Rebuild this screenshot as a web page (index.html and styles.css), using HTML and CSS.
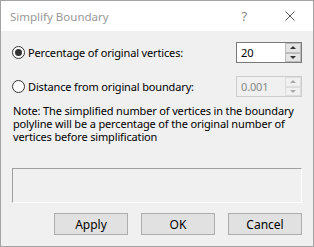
FILE: index.html
```html
<!DOCTYPE html>
<html lang="en">
<head>
<meta charset="UTF-8" />
<title>Simplify Boundary</title>
<link rel="stylesheet" href="styles.css">
</head>
<body>

<div class="window">
  <div class="titlebar">
    <span class="title">Simplify Boundary</span>
    <span class="help">?</span>
    <svg class="close" viewBox="0 0 10 10" width="10" height="10">
      <path d="M0.5 0.5 L9.5 9.5 M9.5 0.5 L0.5 9.5" stroke="#555" stroke-width="1" fill="none"/>
    </svg>
  </div>

  <div class="content">
    <div class="row">
      <label class="option">
        <span class="radio checked"></span>Percentage of original vertices:
      </label>
      <div class="spin">
        <span class="spin-value">20</span>
        <span class="spin-buttons">
          <span class="spin-btn"><i class="tri up"></i></span>
          <span class="spin-btn"><i class="tri down"></i></span>
        </span>
      </div>
    </div>

    <div class="row second">
      <label class="option">
        <span class="radio"></span>Distance from original boundary:
      </label>
      <div class="spin disabled">
        <span class="spin-value">0.001</span>
        <span class="spin-buttons">
          <span class="spin-btn"><i class="tri up"></i></span>
          <span class="spin-btn"><i class="tri down"></i></span>
        </span>
      </div>
    </div>

    <p class="note">Note: The simplified number of vertices in the boundary polyline will be a percentage of the original number of vertices before simplification</p>

    <div class="frame"></div>

    <div class="buttons">
      <button>Apply</button>
      <button>OK</button>
      <button>Cancel</button>
    </div>
  </div>
</div>

</body>
</html>
```

FILE: styles.css
```css
:root {
  --bg: #f0f0f0;
  --border: #a3a3a3;
  --font-ui: "Noto Sans", "Open Sans", sans-serif;
}

body {
  margin: 0;
  font-family: var(--font-ui);
  font-size: 11px;
  letter-spacing: -0.15px;
  color: #000;
}

.window {
  width: 314px;
  height: 247px;
  box-sizing: border-box;
  border: 1px solid var(--border);
  background: var(--bg);
  display: flex;
  flex-direction: column;
}

.titlebar {
  height: 30px;
  background: #fff;
  display: flex;
  align-items: center;
  padding-left: 9px;
  flex-shrink: 0;
}
.title { color: #999; font-size: 11.5px; letter-spacing: 0; flex: 1; }
.help { color: #888; font-size: 13px; margin-right: 38px; }
.close { margin-right: 18px; }

.content { padding: 11px 11px 0 11px; }

.row {
  display: flex;
  align-items: center;
  justify-content: space-between;
  height: 21px;
}
.row.second { margin-top: 13px; }

.option { display: flex; align-items: center; white-space: nowrap; }

.radio {
  width: 11px;
  height: 11px;
  border: 1px solid #333;
  border-radius: 50%;
  background: #fff;
  margin-right: 3px;
  position: relative;
}
.radio.checked::after {
  content: "";
  position: absolute;
  left: 2px;
  top: 2px;
  width: 7px;
  height: 7px;
  border-radius: 50%;
  background: #333;
}

.spin {
  width: 66px;
  height: 21px;
  box-sizing: border-box;
  border: 1px solid #7a7a7a;
  background: #fff;
  display: flex;
}
.spin-value { flex: 1; padding-left: 4px; line-height: 19px; }
.spin-buttons { width: 16px; display: flex; flex-direction: column; }
.spin-btn {
  flex: 1;
  background: #e5e5e5;
  border: 1px solid #bcbcbc;
  display: flex;
  align-items: center;
  justify-content: center;
}
.tri { width: 0; height: 0; border-left: 3px solid transparent; border-right: 3px solid transparent; }
.tri.up { border-bottom: 3px solid #333; }
.tri.down { border-top: 3px solid #333; }

.spin.disabled { border-color: #ccc; background: var(--bg); color: #888; }
.spin.disabled .spin-btn { background: #f0f0f0; border-color: #ddd; }
.spin.disabled .tri.up { border-bottom-color: #aaa; }
.spin.disabled .tri.down { border-top-color: #aaa; }

.note {
  margin: 7px 0 0 1px;
  line-height: 13px;
  width: 282px;
}

.frame {
  margin-top: 25px;
  height: 33px;
  border-top: 1px solid #a0a0a0;
  border-left: 1px solid #a0a0a0;
  border-right: 1px solid #fff;
  border-bottom: 1px solid #fff;
}

.buttons {
  display: flex;
  justify-content: flex-end;
  gap: 13px;
  margin-top: 10px;
}
button {
  width: 74px;
  height: 22px;
  font-family: var(--font-ui);
  font-size: 12px;
  background: #e1e1e1;
  border: 1px solid #adadad;
  padding: 0;
}
```
